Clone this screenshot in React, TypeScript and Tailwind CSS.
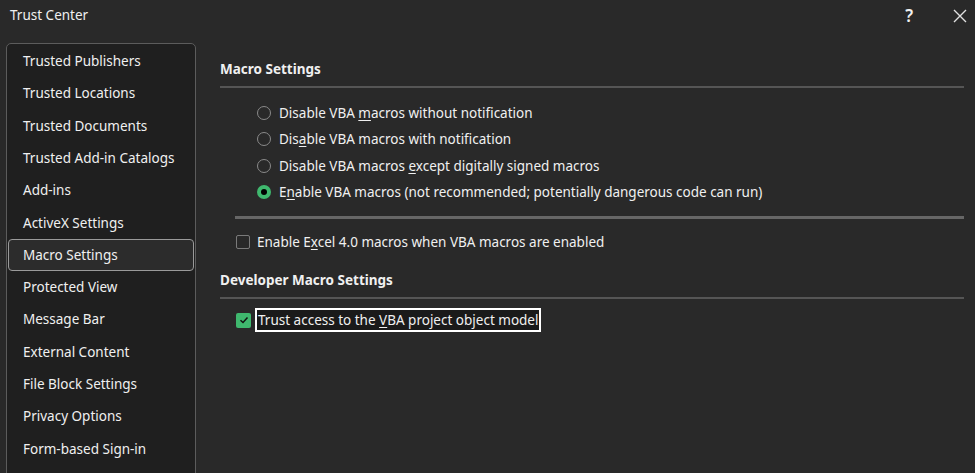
const sections = [
  "Trusted Publishers",
  "Trusted Locations",
  "Trusted Documents",
  "Trusted Add-in Catalogs",
  "Add-ins",
  "ActiveX Settings",
  "Macro Settings",
  "Protected View",
  "Message Bar",
  "External Content",
  "File Block Settings",
  "Privacy Options",
  "Form-based Sign-in",
];

// label with one access-key letter underlined
const Label = ({ text, at }: { text: string; at: number }) => (
  <span>
    {text.slice(0, at)}
    <span className="underline underline-offset-2">{text[at]}</span>
    {text.slice(at + 1)}
  </span>
);

const Radio = ({ checked }: { checked?: boolean }) =>
  checked ? (
    <span className="w-[14px] h-[14px] rounded-full bg-[#3fb86e] flex items-center justify-center">
      <span className="w-[6px] h-[6px] rounded-full bg-black" />
    </span>
  ) : (
    <span className="w-[14px] h-[14px] rounded-full border border-[#8a8a8a]" />
  );

const radios = [
  { text: "Disable VBA macros without notification", at: 12 },
  { text: "Disable VBA macros with notification", at: 3 },
  { text: "Disable VBA macros except digitally signed macros", at: 19 },
  { text: "Enable VBA macros (not recommended; potentially dangerous code can run)", at: 1, checked: true },
];

export default function App() {
  return (
    <div className="w-[975px] h-[473px] overflow-hidden bg-[#292929] text-[#f0f0f0] text-[13.5px] flex flex-col" style={{ fontFamily: '"Noto Sans", "Open Sans", sans-serif' }}>
      <div className="h-[31px] shrink-0 flex items-center pl-[10px] pr-[8px]">
        <span className="flex-1">Trust Center</span>
        <span className="text-[17px] font-semibold mr-[40px]">?</span>
        <svg width="14" height="14" viewBox="0 0 14 14">
          <path d="M1 1 L13 13 M13 1 L1 13" stroke="#e0e0e0" strokeWidth="1.4" />
        </svg>
      </div>
      <div className="flex flex-1 min-h-0 pt-[12px]">
        <div className="ml-[6px] w-[190px] h-[440px] shrink-0 bg-[#1f1f1f] border border-[#5c5c5c] rounded-[5px] pt-[1px] px-[1px]">
          {sections.map((s) =>
            s === "Macro Settings" ? (
              <div key={s} className="h-[32.3px] flex items-center pl-[14px] border border-[#9a9a9a] rounded-[4px] bg-[#2c2c2c]">
                {s}
              </div>
            ) : (
              <div key={s} className="h-[32.3px] flex items-center pl-[15px]">
                {s}
              </div>
            )
          )}
        </div>
        <div className="flex-1 pl-[24px] pr-[11px] flex flex-col">
          <div className="font-bold h-[24px] mt-[14px] flex items-center">Macro Settings</div>
          <div className="h-[2px] bg-[#555555] mt-[5px]" />
          <div className="flex flex-col pl-[37px] pt-[12px]">
            {radios.map((r) => (
              <div key={r.text} className="h-[26.3px] flex items-center gap-[8px]">
                <Radio checked={r.checked} />
                <Label text={r.text} at={r.at} />
              </div>
            ))}
          </div>
          <div className="h-[3px] bg-[#666666] ml-[15px] mt-[11px]" />
          <div className="flex items-center gap-[7px] pl-[16px] h-[24px] mt-[11px]">
            <span className="w-[14px] h-[14px] rounded-[2px] border border-[#7a7a7a]" />
            <Label text="Enable Excel 4.0 macros when VBA macros are enabled" at={8} />
          </div>
          <div className="font-bold h-[24px] mt-[14px] flex items-center">Developer Macro Settings</div>
          <div className="h-[2px] bg-[#555555] mt-[5px]" />
          <div className="flex items-center gap-[4px] pl-[16px] mt-[9px]">
            <span className="w-[15px] h-[15px] rounded-[2px] bg-[#3fb86e] flex items-center justify-center">
              <svg width="10" height="10" viewBox="0 0 10 10">
                <path d="M1.5 5.2 L4 7.5 L8.5 2.5" fill="none" stroke="#111" strokeWidth="1.5" />
              </svg>
            </span>
            <span className="border-2 border-white px-[1px] h-[24px] flex items-center bg-[#1a1a1a]">
              <Label text="Trust access to the VBA project object model" at={20} />
            </span>
          </div>
        </div>
      </div>
    </div>
  );
}
